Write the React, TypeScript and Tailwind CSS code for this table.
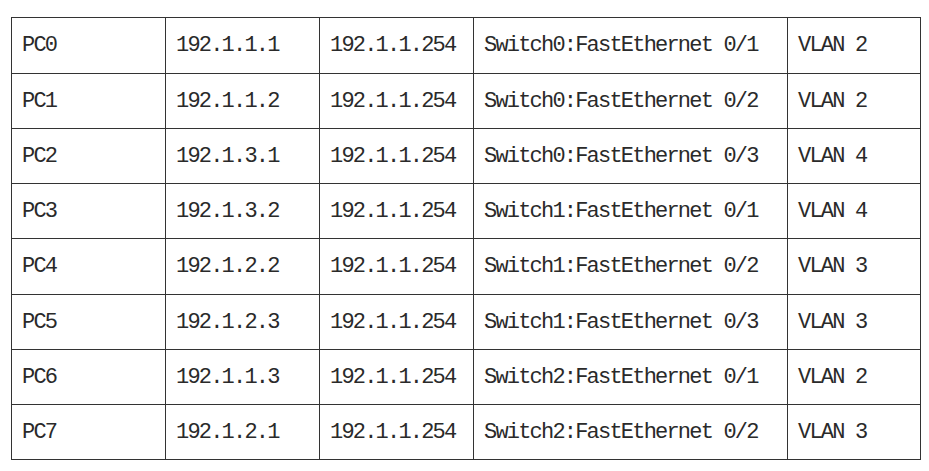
const rows: string[][] = [
  ["PC0", "192.1.1.1", "192.1.1.254", "Switch0:FastEthernet 0/1", "VLAN 2"],
  ["PC1", "192.1.1.2", "192.1.1.254", "Switch0:FastEthernet 0/2", "VLAN 2"],
  ["PC2", "192.1.3.1", "192.1.1.254", "Switch0:FastEthernet 0/3", "VLAN 4"],
  ["PC3", "192.1.3.2", "192.1.1.254", "Switch1:FastEthernet 0/1", "VLAN 4"],
  ["PC4", "192.1.2.2", "192.1.1.254", "Switch1:FastEthernet 0/2", "VLAN 3"],
  ["PC5", "192.1.2.3", "192.1.1.254", "Switch1:FastEthernet 0/3", "VLAN 3"],
  ["PC6", "192.1.1.3", "192.1.1.254", "Switch2:FastEthernet 0/1", "VLAN 2"],
  ["PC7", "192.1.2.1", "192.1.1.254", "Switch2:FastEthernet 0/2", "VLAN 3"],
];

export default function App() {
  return (
    <div className="w-[929px] h-[471px] bg-white pt-[17px] pl-[11px]">
      <div
        className="grid w-[910px] grid-cols-[154px_154px_154px_314px_133px] grid-rows-[56px_55px_55px_55px_56px_55px_55px_55px] border-l border-t border-[#333] text-[22px] tracking-[-1.8px] text-[#2a2a2a]"
        style={{ fontFamily: '"Liberation Mono", "Noto Sans CJK SC", monospace' }}
      >
        {rows.map((row, i) =>
          row.map((cell, j) => (
            <div
              key={`${i}-${j}`}
              className="flex items-center whitespace-pre border-r border-b border-[#333] pl-[10px]"
            >
              {cell}
            </div>
          ))
        )}
      </div>
    </div>
  );
}
